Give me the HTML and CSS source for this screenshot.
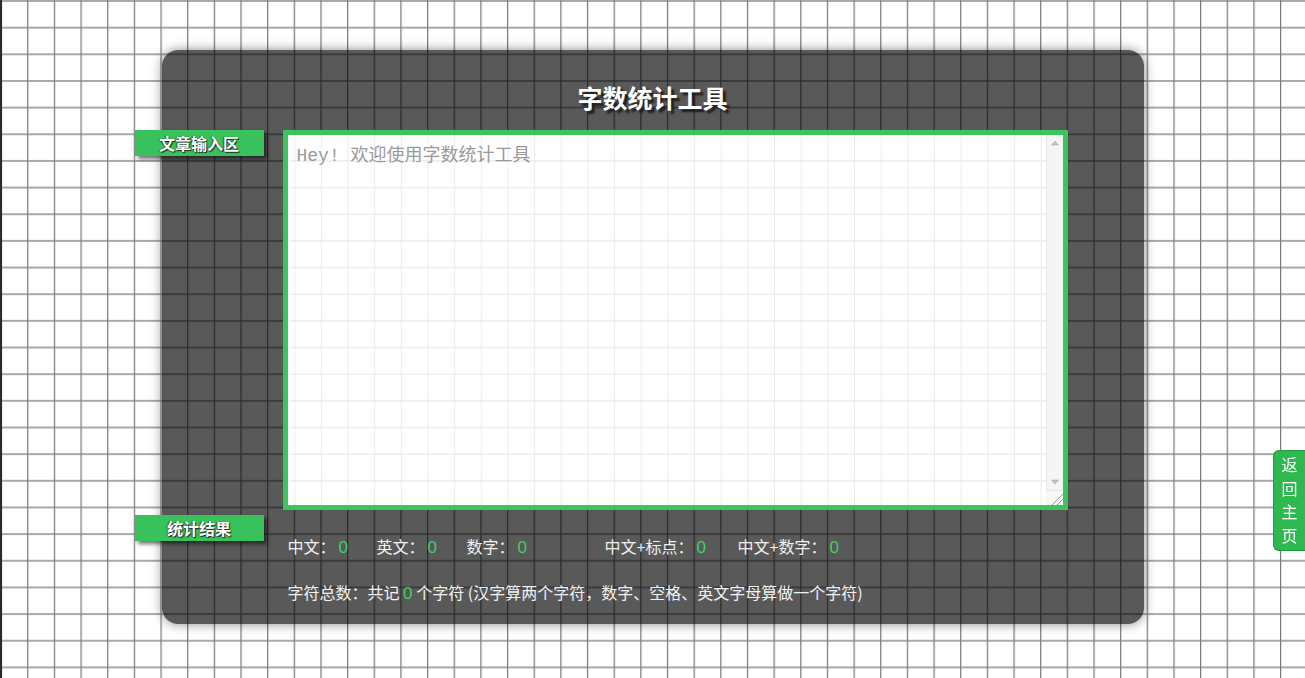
FILE: index.html
```html
<!DOCTYPE html>
<html lang="zh-CN">
<head>
<meta charset="utf-8">
<title>字数统计工具</title>
<link rel="stylesheet" href="styles.css">
</head>
<body>
<div class="panel">
  <h1 class="title">字数统计工具</h1>
  <div class="row input-row">
    <div class="tag">文章输入区</div>
    <div class="editor-wrap">
      <textarea class="editor" placeholder="Hey! 欢迎使用字数统计工具"></textarea>
      <div class="scrollbar" aria-hidden="true">
        <svg class="arrow" width="16" height="16" viewBox="0 0 16 16"><path d="M4.5 10L8 6L11.5 10Z" fill="#c4c4c4" stroke="#a9a9a9" stroke-width="0.6"/></svg>
        <svg class="arrow" width="16" height="16" viewBox="0 0 16 16"><path d="M4.5 6L8 10L11.5 6Z" fill="#c4c4c4" stroke="#a9a9a9" stroke-width="0.6"/></svg>
      </div>
      <div class="corner" aria-hidden="true"></div>
    </div>
  </div>
  <div class="row result-row">
    <div class="tag">统计结果</div>
    <div class="stats">
      <div class="stat-line">
        <span class="item w1">中文：<b class="num">0</b></span>
        <span class="item w2">英文：<b class="num">0</b></span>
        <span class="item w3">数字：<b class="num">0</b></span>
        <span class="item w4">中文+标点：<b class="num">0</b></span>
        <span class="item">中文+数字：<b class="num">0</b></span>
      </div>
      <div class="stat-line total">字符总数：共记 <b class="num">0</b> 个字符 (汉字算两个字符，数字、空格、英文字母算做一个字符)</div>
    </div>
  </div>
</div>
<a class="home" href="#">返<br>回<br>主<br>页</a>
</body>
</html>
```
FILE: styles.css
```css
html, body {
  margin: 0;
  padding: 0;
  height: 100%;
}
body {
  font-family: "Noto Sans CJK SC", "Noto Sans", sans-serif;
  background-color: #fff;
  background-image:
    linear-gradient(to right, #2a2a2a 0 2px, transparent 2px),
    linear-gradient(to right, #7a7a7a 0 1px, rgba(160,160,160,0.35) 1px 2px, transparent 2px),
    linear-gradient(to bottom, #a8a8a8 0 1.5px, transparent 1.5px);
  background-size: 100% 100%, 26.67px 26.67px, 26.67px 26.67px;
  background-repeat: no-repeat, repeat, repeat;
  background-position: 0 0, 0.5px 0, 0 0;
  overflow: hidden;
}
.panel {
  box-sizing: border-box;
  width: 982px;
  height: 574px;
  margin: 50px auto 0;
  background: rgba(0, 0, 0, 0.65);
  border-radius: 16px;
  box-shadow: 0 0 12px rgba(0, 0, 0, 0.45);
}
.title {
  margin: 0;
  padding-top: 30px;
  height: 34px;
  line-height: 34px;
  text-align: center;
  font-size: 25px;
  font-weight: bold;
  color: #fff;
  text-shadow: 3px 3px 2px #1e1e1e;
}
.row {
  display: grid;
  grid-template-columns: 121px 785px;
  align-items: start;
}
.input-row {
  margin-top: 16px;
}
.result-row {
  margin-top: 5px;
}
.tag {
  margin-left: -27px;
  width: 129px;
  height: 26px;
  line-height: 26px;
  background: #38c25c;
  color: #fff;
  font-size: 16px;
  font-weight: 600;
  text-align: center;
  text-shadow: 1px 1px 1px #222, -1px 0 1px rgba(0,0,0,0.5);
  box-shadow: 3px 3px 4px rgba(0, 0, 0, 0.55);
}
.editor-wrap {
  position: relative;
  width: 785px;
  height: 380px;
}
.editor {
  box-sizing: border-box;
  display: block;
  width: 785px;
  height: 380px;
  margin: 0;
  padding: 9px 22px 9px 9px;
  border: 5px solid #3cc55e;
  outline: none;
  resize: both;
  overflow-y: auto;
  font-family: "Liberation Mono", "Noto Sans CJK SC", monospace;
  font-size: 18px;
  line-height: 24px;
  color: #333;
  background-color: #fff;
  background-image:
    linear-gradient(to right, #ececec 0 1px, transparent 1px),
    linear-gradient(to bottom, #f0f0f0 0 1.5px, transparent 1.5px);
  background-size: 26.67px 26.67px;
  background-position: 0.5px 0, 0 0;
  background-attachment: fixed;
}
.editor::placeholder {
  color: #9a9a9a;
  opacity: 1;
}
.scrollbar {
  position: absolute;
  top: 5px;
  right: 5px;
  bottom: 20px;
  width: 16px;
  background: rgba(244, 244, 244, 0.92);
  border-left: 1px solid rgba(230, 230, 230, 0.9);
  display: flex;
  flex-direction: column;
  justify-content: space-between;
  pointer-events: none;
}
.arrow {
  display: block;
}
.corner {
  position: absolute;
  right: 5px;
  bottom: 5px;
  width: 17px;
  height: 15px;
  border-top: 1px solid #e6e6e6;
  box-sizing: border-box;
  background:
    linear-gradient(135deg, transparent 0 62%, #9a9a9a 62% 66%, transparent 66% 78%, #9a9a9a 78% 82%, transparent 82%),
    rgba(246, 246, 246, 0.92);
  pointer-events: none;
}
.stats {
  padding-left: 5px;
  padding-top: 19px;
  color: #f2f2f2;
  font-size: 16px;
}
.stat-line {
  display: flex;
  height: 24px;
  line-height: 24px;
  white-space: nowrap;
}
.total {
  display: block;
  margin-top: 22px;
}
.item {
  flex: none;
}
.w1 { width: 89px; }
.w2 { width: 90px; }
.w3 { width: 138px; }
.w4 { width: 133px; }
.num {
  font-family: "Liberation Sans", sans-serif;
  font-weight: normal;
  color: #3fd064;
  font-size: 17px;
  margin-left: 3px;
}
.total .num {
  margin-left: 0;
}
.home {
  position: fixed;
  right: 0;
  top: 450px;
  box-sizing: border-box;
  width: 32px;
  height: 101px;
  padding-top: 2px;
  background: #2fb84f;
  border: 1px solid #1f9a3c;
  border-right: none;
  border-radius: 6px 0 0 6px;
  color: #fff;
  text-decoration: none;
  text-align: center;
  font-size: 16px;
  line-height: 23.7px;
}
```
